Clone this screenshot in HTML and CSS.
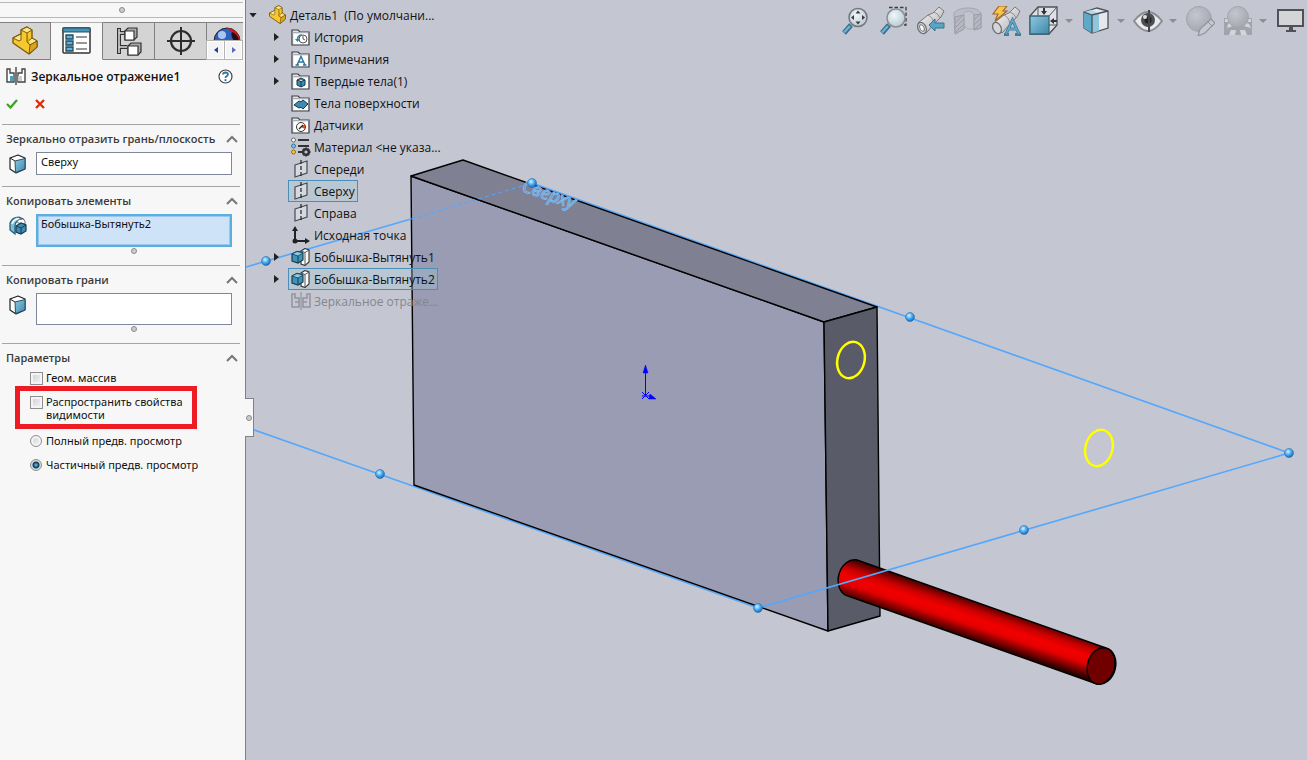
FILE: index.html
```html
<!DOCTYPE html>
<html lang="ru">
<head>
    <meta charset="UTF-8">
    <meta name="viewport" content="width=device-width, initial-scale=1.0">
    <title>Деталь1</title>
    <link rel="stylesheet" href="styles.css">
</head>
<body>
    <!-- Shared icons -->
    <svg class="defs" width="0" height="0" aria-hidden="true">
        <defs>
            <linearGradient id="blueFace" x1="0" y1="0" x2="1" y2="1">
                <stop offset="0" stop-color="#8fc9e0"/>
                <stop offset="1" stop-color="#3d88aa"/>
            </linearGradient>
            <linearGradient id="steel" x1="0" y1="0" x2="1" y2="1">
                <stop offset="0" stop-color="#ffffff"/>
                <stop offset="1" stop-color="#aaaaae"/>
            </linearGradient>
            <radialGradient id="lens" cx="0.4" cy="0.35" r="0.7">
                <stop offset="0" stop-color="#f0f7fa"/>
                <stop offset="1" stop-color="#b4c8d2"/>
            </radialGradient>
            <radialGradient id="ballGrey" cx="0.38" cy="0.35" r="0.65">
                <stop offset="0" stop-color="#c3c6ce"/>
                <stop offset="1" stop-color="#a6a9b1"/>
            </radialGradient>
        </defs>
        <symbol id="part" viewBox="0 0 28 30">
            <path d="M2 12 L10 8 L10 4 L16 1 L21 4 L21 12 L26 15 L26 21 L18 28 L2 17 Z" fill="#f7c92f" stroke="#7d5a0e" stroke-width="1.4" stroke-linejoin="round"/>
            <path d="M10 4 L16 7 L21 4 L16 1 Z M2 12 L8 15 L10 14 L10 8 Z M16 16 L21 12 L26 15 L19 19 Z" fill="#fde68a" stroke="#7d5a0e" stroke-width="1"/>
            <path d="M16 7 V16 L19 19 M19 19 L18 28 L26 21 V15 Z" fill="#d9a51c" stroke="#7d5a0e" stroke-width="1"/>
        </symbol>
        <symbol id="mirror" viewBox="0 0 20 18">
            <path d="M1 2 H4 V6 H8 V15 H1 Z M19 2 H16 V6 H12 V15 H19 Z" fill="#fff" stroke="#444" stroke-width="1.4"/>
            <path d="M4 9 H8 V14 H4 Z" fill="#4a9cc0"/>
            <path d="M12 9 H16 V14 H12 Z" fill="#ccc"/>
            <path d="M10 0 V18" stroke="#222" stroke-width="1.2"/>
        </symbol>
        <symbol id="mirror-off" viewBox="0 0 20 18">
            <path d="M1 2 H4 V6 H8 V15 H1 Z M19 2 H16 V6 H12 V15 H19 Z M4 10 H8 M12 10 H16" fill="none" stroke="#92949c" stroke-width="1.5"/>
            <path d="M10 0 V18" stroke="#92949c" stroke-width="1.2"/>
        </symbol>
        <symbol id="face" viewBox="0 0 18 20">
            <path d="M1 4 L9 1 L16 4 L16 15 L7 19 L1 15 Z" fill="#fff" stroke="#222" stroke-width="1.2" stroke-linejoin="round"/>
            <path d="M6 7 L16 4.500 V15 L6.500 18.500 Z" fill="url(#blueFace)" stroke="#20536b" stroke-width="1"/>
            <path d="M1 4 L6 7" stroke="#222"/>
        </symbol>
        <symbol id="feature" viewBox="0 0 18 20">
            <path d="M1 14 V7 Q3 1 10 1 L14 3 Q7 4 6 9 V18 Z" fill="#7fbcd6" stroke="#24586f" stroke-width="1.2"/>
            <path d="M3 8 Q5 3 10 2.500" fill="none" stroke="#fff" stroke-width="1.500"/>
            <path d="M8 5 Q10 3 14 3 L16 5 V8 L9 7 Z" fill="#fff" stroke="#555" stroke-width="0.8"/>
            <path d="M7 10 L12 7 L17 9 V15 L12 18 L7 16 Z" fill="#3d8db2" stroke="#173f52" stroke-width="1.2"/>
            <path d="M7 10 L12 12 L17 9 M12 12 V18" fill="none" stroke="#173f52" stroke-width="1"/>
        </symbol>
        <symbol id="folder" viewBox="0 0 20 18">
            <path d="M1 17 V2 H7 L9 4 H18 V17 Z" fill="#e9ebef" stroke="#3c3c40" stroke-width="1.2"/>
            <path d="M1.500 4.500 H17.500" stroke="#a9abb0" stroke-width="1.200"/>
            <path d="M3 6 H17 V16 H3 Z" fill="#fff"/>
        </symbol>
        <symbol id="plane" viewBox="0 0 20 18">
            <path d="M4 5 L16 1 V13 L4 17 Z" fill="#d5d9e2" stroke="#4a4a4e" stroke-width="1.2"/>
            <path d="M10 0 V18" stroke="#222" stroke-width="1.2" stroke-dasharray="4 2"/>
        </symbol>
        <symbol id="boss" viewBox="0 0 20 18">
            <path d="M10 3 L14 0.500 L18 2 V14 L14 17.500 L10 16 Z" fill="#fff" stroke="#333" stroke-width="1.100"/>
            <path d="M10 3 L14 4.500 V17 M14 4.500 L18 2" fill="none" stroke="#555"/>
            <path d="M1 6 L6 3.500 L12 5 V12 L7 15 L1 13 Z" fill="#3f93b8" stroke="#173f52" stroke-width="1.2"/>
            <path d="M1 6 L7 8 L12 5 L6 3.500 Z" fill="#8ccbe2" stroke="#173f52" stroke-width="0.800"/>
            <path d="M7 8 V15" stroke="#173f52"/>
        </symbol>
        <symbol id="chevron" viewBox="0 0 12 8">
            <path d="M1 7 L6 2 L11 7" fill="none" stroke="#777" stroke-width="2"/>
        </symbol>
    </svg>

    <div class="app">
        <!-- Property manager -->
        <aside class="panel">
            <div class="grip-bar"><span class="grip"></span></div>
            <div class="tabs">
                <button type="button" class="tab" aria-label="Дерево конструирования">
                    <svg width="28" height="30"><use href="#part"/></svg>
                </button>
                <button type="button" class="tab active" aria-label="Менеджер свойств">
                    <svg width="30" height="28" viewBox="0 0 30 28">
                        <rect x="1" y="1" width="27" height="25" rx="1" fill="#fff" stroke="#333" stroke-width="1.500"/>
                        <rect x="1" y="1" width="27" height="4" fill="#4593b5" stroke="#27506a"/>
                        <path d="M4 8 H11 V12 H4 Z M4 14 H11 V18 H4 Z M4 20 H11 V24 H4 Z" fill="#63b3d6" stroke="#1e4a60" stroke-width="1.300"/>
                        <path d="M14 10 H25 M14 16 H25 M14 22 H25" stroke="#333" stroke-width="1.200"/>
                    </svg>
                </button>
                <button type="button" class="tab" aria-label="Менеджер конфигураций">
                    <svg width="28" height="30" viewBox="0 0 28 30">
                        <path d="M4 2 V28 M4 7 H10 M4 21 H12" fill="none" stroke="#333" stroke-width="4"/>
                        <path d="M4 3 V27 M4 7 H10 M4 21 H12" fill="none" stroke="#ddd" stroke-width="1.500"/>
                        <path d="M10 5 L13 2 H22 V11 L19 14 H10 Z M13 20 L16 17 H26 V26 L23 29 H13 Z" fill="#aaa" stroke="#333" stroke-width="1.200"/>
                        <path d="M10 5 H19 V14 H10 Z M13 20 H23 V29 H13 Z" fill="#fff" stroke="#333" stroke-width="1.200"/>
                    </svg>
                </button>
                <button type="button" class="tab" aria-label="Менеджер размеров">
                    <svg width="28" height="28" viewBox="0 0 28 28">
                        <circle cx="14" cy="14" r="10" fill="none" stroke="#2d2d2d" stroke-width="2.200"/>
                        <path d="M14 0 V28 M0 14 H28" stroke="#2d2d2d" stroke-width="2"/>
                    </svg>
                </button>
                <button type="button" class="tab tab-cut" aria-label="Менеджер отображения">
                    <svg width="28" height="28" viewBox="0 0 28 28">
                        <circle cx="14" cy="14" r="13" fill="#2f62c0" stroke="#222"/>
                        <path d="M14 1 A13 13 0 0 1 27 14 H21 Q20 5 14 1 Z" fill="#c22020"/>
                        <path d="M19 5 Q25 7 26 14 H21 Q17 8 19 5 Z" fill="#2a0d10"/>
                        <circle cx="9" cy="8" r="4" fill="#a9c6f3"/>
                    </svg>
                </button>
                <div class="tab-scroll">
                    <button type="button" aria-label="Назад"><svg width="4" height="6" viewBox="0 0 4 6"><path d="M4 0 V6 L0 3 Z" fill="#2c3f8c"/></svg></button>
                    <button type="button" aria-label="Вперед"><svg width="4" height="6" viewBox="0 0 4 6"><path d="M0 0 V6 L4 3 Z" fill="#5a6bbd"/></svg></button>
                </div>
            </div>

            <header class="title">
                <svg width="20" height="18"><use href="#mirror"/></svg>
                <h1>Зеркальное отражение1</h1>
                <button type="button" class="icon-btn" aria-label="Справка">
                    <svg width="15" height="15" viewBox="0 0 15 15">
                        <circle cx="7.500" cy="7.500" r="6.500" fill="#fff" stroke="#444" stroke-width="1.200"/>
                        <path d="M5 5.500 Q5.200 3.500 7.500 3.500 Q10 3.600 9.900 5.500 Q9.800 6.800 8.500 7.300 Q7.500 7.800 7.500 9" fill="none" stroke="#2a78a5" stroke-width="1.800"/>
                        <circle cx="7.500" cy="11.200" r="1.100" fill="#2a78a5"/>
                    </svg>
                </button>
            </header>
            <div class="confirm">
                <button type="button" class="icon-btn" aria-label="ОК">
                    <svg width="12" height="10" viewBox="0 0 12 10"><path d="M1 5 L4.500 8.500 L11 1" fill="none" stroke="#3da324" stroke-width="2.300"/></svg>
                </button>
                <button type="button" class="icon-btn" aria-label="Отмена">
                    <svg width="10" height="10" viewBox="0 0 10 10"><path d="M1 1 L9 9 M9 1 L1 9" stroke="#dd2a06" stroke-width="2.300"/></svg>
                </button>
            </div>

            <form>
                <section class="group">
                    <div class="group-head">
                        <label for="mirrorFace">Зеркально отразить грань/плоскость</label>
                        <button type="button" class="icon-btn" aria-label="Свернуть"><svg width="12" height="8"><use href="#chevron"/></svg></button>
                    </div>
                    <div class="pick">
                        <svg width="18" height="20"><use href="#face"/></svg>
                        <textarea id="mirrorFace" class="one-line" rows="1">Сверху</textarea>
                    </div>
                </section>

                <section class="group">
                    <div class="group-head">
                        <label for="features">Копировать элементы</label>
                        <button type="button" class="icon-btn" aria-label="Свернуть"><svg width="12" height="8"><use href="#chevron"/></svg></button>
                    </div>
                    <div class="pick">
                        <svg width="18" height="20"><use href="#feature"/></svg>
                        <textarea id="features" class="selected" rows="2">Бобышка-Вытянуть2</textarea>
                    </div>
                    <div class="resize"><span class="grip"></span></div>
                </section>

                <section class="group">
                    <div class="group-head">
                        <label for="faces">Копировать грани</label>
                        <button type="button" class="icon-btn" aria-label="Свернуть"><svg width="12" height="8"><use href="#chevron"/></svg></button>
                    </div>
                    <div class="pick">
                        <svg width="18" height="20"><use href="#face"/></svg>
                        <textarea id="faces" rows="2"></textarea>
                    </div>
                    <div class="resize"><span class="grip"></span></div>
                </section>

                <section class="group">
                    <div class="group-head">
                        <h2>Параметры</h2>
                        <button type="button" class="icon-btn" aria-label="Свернуть"><svg width="12" height="8"><use href="#chevron"/></svg></button>
                    </div>
                    <div class="options">
                        <label class="option"><input type="checkbox" name="geom"><span>Геом. массив</span></label>
                        <label class="option marked"><input type="checkbox" name="visual"><span>Распространить свойства видимости</span></label>
                        <label class="option"><input type="radio" name="preview" value="full"><span>Полный предв. просмотр</span></label>
                        <label class="option"><input type="radio" name="preview" value="partial" checked><span>Частичный предв. просмотр</span></label>
                    </div>
                </section>
            </form>
        </aside>

        <!-- Graphics area -->
        <main class="viewport">
            <svg class="scene" viewBox="246 0 1061 760" preserveAspectRatio="xMinYMin meet">
                <defs>
                    <linearGradient id="rod" gradientUnits="userSpaceOnUse" x1="982" y1="603" x2="970" y2="639">
                        <stop offset="0" stop-color="#4a0000"/>
                        <stop offset="0.250" stop-color="#c80000"/>
                        <stop offset="0.450" stop-color="#f20000"/>
                        <stop offset="0.650" stop-color="#e40000"/>
                        <stop offset="1" stop-color="#2c0000"/>
                    </linearGradient>
                    <radialGradient id="ball" cx="0.400" cy="0.350" r="0.650">
                        <stop offset="0" stop-color="#d8f2ff"/>
                        <stop offset="0.500" stop-color="#4bb0f5"/>
                        <stop offset="1" stop-color="#1b66b0"/>
                    </radialGradient>
                </defs>

                <path class="plane-line" d="M532 183 L1289 453 M246 427 L758 608"/>

                <g class="block">
                    <path d="M411 176 L824 322 L828 631 L414 485 Z" fill="#999cb2"/>
                    <path d="M411 176 L463 160 L877 307 L824 322 Z" fill="#7f8193"/>
                    <path d="M824 322 L877 307 L880 616 L828 631 Z" fill="#595c68"/>
                </g>

                <path d="M857 560 L1106 648 A14 18.500 15 0 1 1097 684 L848 596 A14 18.500 15 0 1 857 560 Z" fill="url(#rod)" stroke="#000" stroke-width="1.400"/>
                <ellipse cx="1101" cy="666" rx="13.500" ry="18.500" transform="rotate(15 1101 666)" fill="#700000" stroke="#000" stroke-width="1.400"/>

                <path class="plane-line" d="M246 267 L411 219 M758 608 L1289 453"/>
                <path class="plane-line dashed" d="M411 219 L532 183"/>
                <text class="plane-name" x="521" y="191" transform="rotate(19 521 191)">Сверху</text>

                <g fill="none" stroke="#ffff00" stroke-width="2.500">
                    <ellipse cx="851" cy="360" rx="13.500" ry="18.500" transform="rotate(15 851 360)"/>
                    <ellipse cx="1099" cy="448" rx="13.500" ry="18.500" transform="rotate(15 1099 448)"/>
                </g>

                <g fill="url(#ball)" stroke="#2f6ea8" stroke-width="0.600">
                    <circle cx="266" cy="261" r="4.500"/>
                    <circle cx="532" cy="183" r="4.500"/>
                    <circle cx="910" cy="317" r="4.500"/>
                    <circle cx="1289" cy="453" r="4.500"/>
                    <circle cx="1024" cy="530" r="4.500"/>
                    <circle cx="758" cy="608" r="4.500"/>
                    <circle cx="380" cy="474" r="4.500"/>
                </g>

                <g stroke="#0000ff" fill="#0000ff">
                    <path d="M645.500 396 V370 M642 396 H650 M642 392 L649 399 M649 392 L642 399"/>
                    <path d="M645.500 365 L648 373 H643 Z M650 394 L656 399 L649 399 Z" stroke-width="0.500"/>
                </g>
            </svg>

            <button type="button" class="panel-handle" aria-label="Скрыть панель"><span class="grip"></span></button>

            <div class="overlay">
                <ul class="tree">
                    <li>
                        <div class="root">
                            <span class="arrow open"></span>
                            <svg width="19" height="20"><use href="#part"/></svg>
                            <span class="pre">Деталь1  (По умолчани...</span>
                        </div>
                        <ul>
                            <li><span class="arrow"></span><a href="#"><svg width="20" height="18" viewBox="0 0 20 18"><use href="#folder"/><circle cx="12" cy="11" r="4" fill="#fff" stroke="#555"/><path d="M12 8 V11 L14 12" fill="none" stroke="#555"/><path d="M4 11 H9 L6.500 14 Z" fill="#2a82ac"/><path d="M6.500 11 Q7 7 11 7" fill="none" stroke="#2a82ac" stroke-width="1.500"/></svg>История</a></li>
                            <li><span class="arrow"></span><a href="#"><svg width="20" height="18" viewBox="0 0 20 18"><use href="#folder"/><path d="M6 15 L10 6.500 L14 15 M7.500 12 H12.500 M4.500 15 H8 M12 15 H15.500" fill="none" stroke="#2a77a0" stroke-width="1.500"/></svg>Примечания</a></li>
                            <li><span class="arrow"></span><a href="#"><svg width="20" height="18" viewBox="0 0 20 18"><use href="#folder"/><path d="M6 8 L10 6 L14 8 V13 L10 15 L6 13 Z M6 8 L10 9.500 L14 8 M10 9.500 V15" fill="#3d8db2" stroke="#12384a"/></svg>Твердые тела(1)</a></li>
                            <li><span class="arrow none"></span><a href="#"><svg width="20" height="18" viewBox="0 0 20 18"><use href="#folder"/><path d="M3 11 L8 7 Q10 9 12 6 L17 10 L12 15 Q10 12 8 14 Z" fill="#3d8db2" stroke="#12384a"/></svg>Тела поверхности</a></li>
                            <li><span class="arrow none"></span><a href="#"><svg width="20" height="18" viewBox="0 0 20 18"><use href="#folder"/><circle cx="10" cy="11" r="4.500" fill="#fff" stroke="#333"/><path d="M10 11 L14 8 V13 Z" fill="#e04a1a"/><path d="M8 13 L12 9" stroke="#222" stroke-width="1.200"/></svg>Датчики</a></li>
                            <li><span class="arrow none"></span><a href="#"><svg width="20" height="20" viewBox="0 0 20 20"><path d="M7 3 H18 M7 9 H18 M7 15 H11" stroke="#333" stroke-width="2"/><circle cx="2.500" cy="3" r="2" fill="#fff" stroke="#666"/><circle cx="2.500" cy="9" r="2" fill="#7cc4e8" stroke="#2a77a0"/><circle cx="2.500" cy="15" r="2" fill="#f8c82c" stroke="#9a6d10"/><circle cx="15" cy="15" r="2.800" fill="none" stroke="#333" stroke-width="2.400"/><path d="M15 10.500 V12 M15 18 V19.500 M10.500 15 H12 M18 15 H19.500 M12 12 L13 13 M17 17 L18 18 M18 12 L17 13 M12 18 L13 17" stroke="#333" stroke-width="1.800"/></svg>Материал &lt;не указа...</a></li>
                            <li><span class="arrow none"></span><a href="#"><svg width="20" height="18"><use href="#plane"/></svg>Спереди</a></li>
                            <li><span class="arrow none"></span><a href="#" class="picked"><svg width="20" height="18"><use href="#plane"/></svg>Сверху</a></li>
                            <li><span class="arrow none"></span><a href="#"><svg width="20" height="18"><use href="#plane"/></svg>Справа</a></li>
                            <li><span class="arrow none"></span><a href="#"><svg width="20" height="18" viewBox="0 0 20 18"><path d="M4 3 V15 H16" fill="none" stroke="#222" stroke-width="2"/><path d="M4 0 L7 5 H1 Z M19 15 L14 12 V18 Z" fill="#222"/><circle cx="4" cy="15" r="2.500" fill="#222"/></svg>Исходная точка</a></li>
                            <li><span class="arrow"></span><a href="#"><svg width="20" height="18"><use href="#boss"/></svg>Бобышка-Вытянуть1</a></li>
                            <li><span class="arrow"></span><a href="#" class="picked"><svg width="20" height="18"><use href="#boss"/></svg>Бобышка-Вытянуть2</a></li>
                            <li><span class="arrow none"></span><a href="#" class="dim"><svg width="20" height="18"><use href="#mirror-off"/></svg>Зеркальное отраже...</a></li>
                        </ul>
                    </li>
                </ul>

                <div class="toolbar">
                    <button type="button" aria-label="Изменить в размер экрана">
                        <svg width="30" height="30" viewBox="0 0 30 30">
                            <path d="M12 19 L5 27" stroke="#356f8c" stroke-width="5"/><path d="M11 20 L5 26.500" stroke="#6fb2cf" stroke-width="2.500"/>
                            <circle cx="19" cy="11.500" r="9" fill="url(#lens)" stroke="#75777c" stroke-width="1.500"/>
                            <path d="M19 4.500 L21.500 7.500 H16.500 Z M19 18.500 L21.500 15.500 H16.500 Z M12 11.500 L15 9 V14 Z M26 11.500 L23 9 V14 Z" fill="#3a3c42"/>
                        </svg>
                    </button>
                    <button type="button" aria-label="Увеличить элемент вида">
                        <svg width="30" height="30" viewBox="0 0 30 30">
                            <path d="M12 1.500 H29 V19 H24" fill="none" stroke="#3a3c42" stroke-width="1.300" stroke-dasharray="3.500 2"/>
                            <path d="M12 19 L5 27" stroke="#356f8c" stroke-width="5"/><path d="M11 20 L5 26.500" stroke="#6fb2cf" stroke-width="2.500"/>
                            <circle cx="19" cy="12" r="9" fill="url(#lens)" stroke="#8b8d93" stroke-width="1.500"/>
                        </svg>
                    </button>
                    <button type="button" aria-label="Предыдущий вид">
                        <svg width="30" height="30" viewBox="0 0 30 30">
                            <path d="M3 17 L13 9 L18 7 L24 1 L29 5 L26 11 L22 15 L11 27 Z" fill="url(#steel)" stroke="#77797e"/>
                            <path d="M13 9 Q18 11 19 18 M19 6 Q24 8 25 12" fill="none" stroke="#8d8f94"/>
                            <ellipse cx="7" cy="22" rx="4" ry="6" transform="rotate(-25 7 22)" fill="#d5d5d8" stroke="#6d6f74" stroke-width="1.300"/>
                            <ellipse cx="7" cy="22" rx="2" ry="3.500" transform="rotate(-25 7 22)" fill="#fff" stroke="#77797e"/>
                            <path d="M14 19 L20 13 V17 H29 V22 H20 V25 Z" fill="#5ba5c4" stroke="#38738e"/>
                        </svg>
                    </button>
                    <button type="button" aria-label="Разрез" disabled>
                        <svg width="30" height="30" viewBox="0 0 30 30">
                            <path d="M1 7 Q5 2 15 2 Q25 2 28 7 V22 L21 24 V14 L11 12 V23 L2 28 Z" fill="#bbbec8" stroke="#a3a6b0"/>
                            <path d="M10 9 Q11 5 15 5 Q20 5 21 9 V23 H15 L11 20 Z" fill="#c2c5ce" stroke="#a9acb5"/>
                            <path d="M2 11 L11 9 V23 L2 28 Z M21 9 L28 8 V22 L21 24 Z" fill="#b5b8c2" stroke="#9a9da7"/>
                            <path d="M2 17 L9 10 M2 22 L11 13 M3 26 L11 18 M21 14 L26 9 M21 19 L28 12 M22 23 L28 17" stroke="#9a9da7"/>
                        </svg>
                    </button>
                    <button type="button" aria-label="Динамические примечания">
                        <svg width="30" height="30" viewBox="0 0 30 30">
                            <path d="M3 17 L13 9 L18 7 L24 1 L29 5 L26 11 L22 15 L11 27 Z" fill="url(#steel)" stroke="#77797e"/>
                            <path d="M13 9 Q18 11 19 18 M19 6 Q24 8 25 12" fill="none" stroke="#8d8f94"/>
                            <ellipse cx="6" cy="22" rx="4" ry="6" transform="rotate(-25 6 22)" fill="#d5d5d8" stroke="#6d6f74" stroke-width="1.300"/>
                            <path d="M8 0 H16 L12 5 H16 L4 15 L7 8 H2 Z" fill="#f7c74a" stroke="#a8642a" stroke-width="1.200"/>
                            <path d="M15 28 L21.500 14 L28 28 M17.500 23 H25.500 M13 28.500 H18 M24 28.500 H30" fill="none" stroke="#3f7f9e" stroke-width="3"/>
                            <path d="M15 28 L21.500 14 L28 28 M17.500 23 H25.500" fill="none" stroke="#65a9c6" stroke-width="1.500"/>
                        </svg>
                    </button>
                    <div class="tool-group">
                        <button type="button" aria-label="Ориентация вида">
                            <svg width="30" height="30" viewBox="0 0 30 30">
                                <path d="M1 10 L9 1 H28 V19 L20 28 H1 Z" fill="#dfe1e7" stroke="#505258" stroke-width="1.300"/>
                                <path d="M9 1 V10 M20 10 L28 1 M20 19 H28 L20 28" fill="none" stroke="#505258"/>
                                <path d="M1 10 H20 V28 H1 Z" fill="url(#blueFace)" stroke="#3d6577" stroke-width="1.300"/>
                                <path d="M15 2 V6 M28 15 H24" stroke="#333" stroke-width="2"/><path d="M12 5 H18 L15 9 Z M25 12 V18 L21 15 Z" fill="#333"/>
                            </svg>
                        </button>
                        <span class="drop"></span>
                    </div>
                    <div class="tool-group">
                        <button type="button" aria-label="Стиль отображения">
                            <svg width="30" height="30" viewBox="0 0 30 30">
                                <path d="M3 6 L16 2 L27 5 V22 L11 27 L3 22 Z" fill="#e6e7ec" stroke="#4e5157" stroke-width="1.300"/>
                                <path d="M3 6 L11 9 V27 L3 22 Z" fill="#5fa9c8"/><path d="M11 9 L18 7.500 V25 L11 27 Z" fill="#8fc6dc"/><path d="M3 6 L10 4 L18 7.500 L11 9 Z" fill="#a8dcec"/>
                                <path d="M3 6 L11 9 L27 5 M11 9 V27" fill="none" stroke="#4e5157" stroke-width="1.300"/>
                            </svg>
                        </button>
                        <span class="drop"></span>
                    </div>
                    <div class="tool-group">
                        <button type="button" aria-label="Скрыть/отобразить элементы">
                            <svg width="30" height="30" viewBox="0 0 30 30">
                                <path d="M1 15 Q8 6 15 6 Q22 6 29 15 Q22 25 15 25 Q8 25 1 15 Z" fill="#e9eaec" stroke="#8a8c91" stroke-width="2"/>
                                <circle cx="15" cy="14" r="7" fill="#4d4f54"/><circle cx="15" cy="14" r="3.500" fill="#222"/><circle cx="12" cy="11" r="2" fill="#ddd"/>
                                <path d="M16 4 V26" stroke="#45474c" stroke-width="2"/>
                            </svg>
                        </button>
                        <span class="drop"></span>
                    </div>
                    <button type="button" aria-label="Редактировать внешний вид" disabled>
                        <svg width="30" height="30" viewBox="0 0 30 30">
                            <circle cx="14" cy="13" r="12.500" fill="url(#ballGrey)" stroke="#a0a3ac"/>
                            <path d="M13 30 L15 23 L26 13 L30 17 L20 27 Z" fill="#c6c8cf" stroke="#90939c" stroke-width="1.200"/>
                            <path d="M23 16 L27 20" stroke="#90939c"/>
                        </svg>
                    </button>
                    <div class="tool-group">
                        <button type="button" aria-label="Применить сцену" disabled>
                            <svg width="30" height="30" viewBox="0 0 30 30">
                                <path d="M1 12 H29 V29 H1 Z" fill="#a1a4ad"/>
                                <path d="M2 13 H6 V16 H2 Z M24 13 H28 V16 H24 Z M5 18 L9 16 L10 20 L4 22 Z M21 16 L26 18 L28 22 L21 20 Z M8 24 L13 24 L12 29 H6 Z M17 24 H22 L24 29 H18 Z" fill="#d3d5db"/>
                                <circle cx="15" cy="11" r="10.500" fill="url(#ballGrey)" stroke="#a3a6ae"/>
                            </svg>
                        </button>
                        <span class="drop"></span>
                    </div>
                    <button type="button" aria-label="Параметры вида">
                        <svg width="30" height="30" viewBox="0 0 30 30">
                            <rect x="3" y="4" width="25" height="16" fill="#d4d5d8" stroke="#505257" stroke-width="2"/>
                            <path d="M14 21 H18 V24 H21 V26 H11 V24 H14 Z" fill="#505257"/>
                        </svg>
                    </button>
                </div>
            </div>
        </main>
    </div>
</body>
</html>
```
FILE: styles.css
```css
* {
    box-sizing: border-box;
}

body {
    margin: 0;
    font-family: "Noto Sans", "Open Sans", sans-serif;
    font-size: 11px;
    color: #111;
    background-color: #c4c7d2;
}

button {
    padding: 0;
    border: none;
    background: none;
    cursor: pointer;
}

svg {
    display: block;
    flex-shrink: 0;
}

.defs {
    position: absolute;
}

.app {
    display: flex;
    min-height: 100vh;
}

/* left panel */
.panel {
    width: 246px;
    flex-shrink: 0;
    padding-right: 2px;
    background-color: #f7f7f7;
    border-right: 1px solid #808085;
}

.grip {
    display: block;
    width: 6px;
    height: 6px;
    border: 1px solid #8c8c8c;
    border-radius: 50%;
    background-color: #ccc;
}

.grip-bar {
    display: flex;
    justify-content: center;
    align-items: center;
    height: 16px;
    margin-top: 2px;
    border-top: 1px solid #b9b9b9;
    border-bottom: 1px solid #b9b9b9;
}

.tabs {
    position: relative;
    display: flex;
    height: 38px;
    margin-top: 4px;
    overflow: hidden;
}

.tab {
    display: flex;
    justify-content: center;
    align-items: center;
    width: 52px;
    flex-shrink: 0;
    background-color: #d4d4d4;
    border: 1px solid #808080;
    border-left: none;
}

.tab:first-child {
    width: 51px;
}

.tab.active {
    background-color: #f7f7f7;
    border-top-color: #b0b0b0;
    border-bottom-color: #f7f7f7;
}

.tab-cut {
    justify-content: flex-start;
    padding-left: 6px;
}

.tab-scroll {
    position: absolute;
    right: 0;
    bottom: 0;
    display: flex;
    gap: 1px;
    padding: 1px;
    background-color: #b4b4b4;
}

.tab-scroll button {
    display: flex;
    justify-content: center;
    align-items: center;
    width: 17px;
    height: 18px;
    background-color: #f4f4f4;
    border: 1px solid #fff;
}

.title {
    display: flex;
    align-items: center;
    gap: 5px;
    height: 32px;
    padding: 0 10px 0 6px;
}

.title h1 {
    flex: 1;
    margin: 0;
    font-family: "Open Sans", "Noto Sans", sans-serif;
    font-size: 12px;
    font-weight: 600;
    white-space: nowrap;
}

.confirm {
    display: flex;
    align-items: center;
    gap: 17px;
    height: 32px;
    padding: 0 6px 8px;
}

.group {
    margin: 0 3px 0 2px;
    padding-bottom: 11px;
    border-top: 1px solid #a5a5a5;
}

.group-head {
    display: flex;
    justify-content: space-between;
    align-items: center;
    height: 27px;
    padding: 0 2px 0 4px;
    font-family: "Open Sans", "Noto Sans", sans-serif;
    font-weight: 600;
    color: #3a3a3a;
}

.group-head h2 {
    margin: 0;
    font-size: 11px;
    font-weight: 600;
}

.pick {
    display: flex;
    gap: 9px;
    padding: 0 8px 0 7px;
}

.pick svg {
    margin-top: 2px;
}

.pick textarea {
    flex: 1;
    min-width: 0;
    height: 32px;
    padding: 2px 4px;
    border: 1px solid #7f889b;
    font-family: inherit;
    font-size: 11px;
    line-height: 14px;
    color: #111;
    background-color: #fff;
    resize: none;
    overflow: hidden;
}

.pick textarea.one-line {
    height: 23px;
}

.pick textarea.selected {
    height: 33px;
    padding: 1px 3px;
    border: 2px solid #5aaee0;
    background-color: #cfe3f8;
    box-shadow: inset 0 0 0 1px #9cc7ec;
}

.resize {
    display: flex;
    justify-content: center;
    height: 6px;
    padding-left: 26px;
    margin-top: 1px;
}

.options {
    display: flex;
    flex-direction: column;
    align-items: flex-start;
    padding-left: 28px;
}

.option {
    display: flex;
    gap: 3px;
    height: 24px;
    line-height: 13px;
}

.option:first-child {
    height: 15px;
    padding-top: 1px;
}

.option.marked {
    width: 182px;
    height: 43px;
    margin: 0 0 6px -15px;
    padding: 5px 0 0 10px;
    border: 5px solid #ed1c24;
}

.option span {
    margin-top: -1px;
}

.option input {
    appearance: none;
    width: 13px;
    height: 13px;
    flex-shrink: 0;
    margin: 0;
    border: 1px solid #8e8f8f;
    background: linear-gradient(135deg, #cdd0d6, #f6f6f6);
    box-shadow: inset 0 0 0 2px #f4f4f4;
}

.option input[type="radio"] {
    width: 12px;
    height: 12px;
    margin-right: 1px;
    border-radius: 50%;
}

.option input[type="radio"]:checked {
    background: radial-gradient(circle, #7cd0f0 0, #1b5f8c 2px, #12364f 3px, #d8dce0 4px);
    box-shadow: none;
}

/* graphics area */
.viewport {
    position: relative;
    flex: 1;
    min-width: 0;
}

.scene {
    position: absolute;
    top: 0;
    left: 0;
    width: 100%;
    height: 100%;
}

.block path {
    stroke: #000;
    stroke-width: 1.4px;
    stroke-linejoin: round;
}

.plane-line {
    fill: none;
    stroke: #55a7fb;
    stroke-width: 1.6px;
}

.plane-line.dashed {
    stroke-width: 1px;
    stroke-dasharray: 4 3;
}

.plane-name {
    font-size: 18px;
    font-style: italic;
    fill: #7f8193;
    stroke: #7ab8f0;
    stroke-width: 1px;
}

.panel-handle {
    position: absolute;
    top: 55%;
    left: -1px;
    display: flex;
    justify-content: center;
    align-items: center;
    width: 9px;
    height: 39px;
    margin-top: -20px;
    background-color: #f7f7f7;
    border: 1px solid #808085;
    border-left: none;
}

.overlay {
    position: relative;
    display: flex;
    justify-content: space-between;
    align-items: flex-start;
}

.tree,
.tree ul {
    margin: 0;
    padding: 0;
    list-style: none;
}

.tree {
    padding-top: 4px;
    font-family: "Open Sans", "Noto Sans", sans-serif;
    font-size: 12px;
    white-space: nowrap;
}

.root {
    display: flex;
    align-items: center;
    gap: 3px;
    height: 22px;
    padding-left: 3px;
}

.root svg {
    margin-left: 8px;
}

.pre {
    white-space: pre;
}

.tree ul {
    padding-left: 28px;
}

.tree ul li {
    display: flex;
    align-items: center;
    gap: 9px;
    height: 22px;
}

.tree a {
    display: flex;
    align-items: center;
    gap: 3px;
    height: 22px;
    padding: 0 2px;
    border: 1px solid transparent;
    color: #111;
    text-decoration: none;
}

.tree a.picked {
    border-color: #4a8fb8;
    background-color: rgba(160, 200, 215, 0.3);
}

.tree a.dim {
    color: #84868d;
}

.arrow {
    width: 5px;
    height: 8px;
    flex-shrink: 0;
    background-color: #222;
    clip-path: polygon(0 0, 100% 50%, 0 100%);
}

.arrow.open {
    width: 8px;
    height: 5px;
    clip-path: polygon(0 0, 100% 0, 50% 100%);
}

.arrow.none {
    visibility: hidden;
}

.toolbar {
    display: flex;
    gap: 8px;
    padding: 6px 2px 0 0;
}

.tool-group {
    display: flex;
    align-items: center;
    gap: 6px;
}

.drop {
    width: 8px;
    height: 4px;
    background-color: #8b8e97;
    clip-path: polygon(0 0, 100% 0, 50% 100%);
}
```
